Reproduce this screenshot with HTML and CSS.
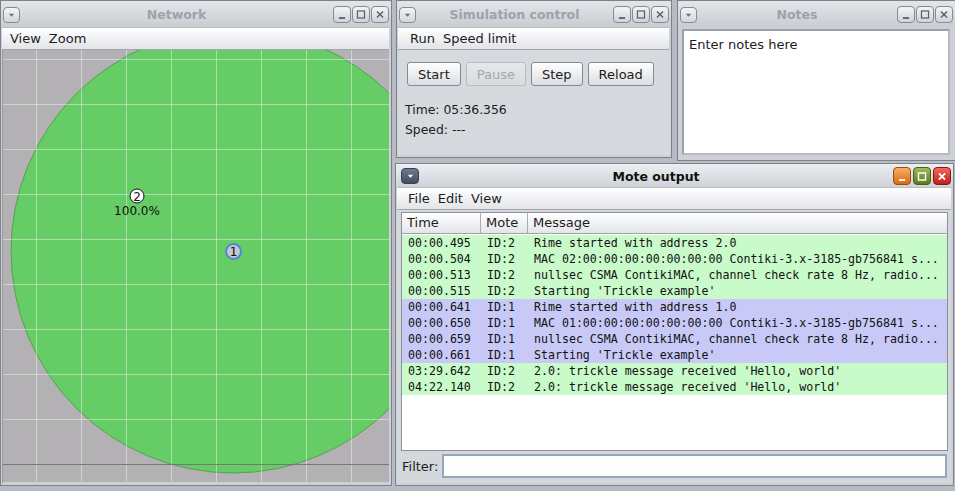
FILE: index.html
```html
<!DOCTYPE html>
<html>
<head>
<meta charset="utf-8">
<link rel="stylesheet" href="styles.css">
</head>
<body>

<div class="win net">
  <div class="titlebar">
    <span class="dd"><svg width="16" height="16" viewBox="0 0 16 16"><path d="M5 6.5h6l-3 3.5z" fill="#6b7079"/></svg></span>
    <span class="ttl">Network</span>
    <span class="btns">
      <span class="tb"><svg width="17" height="17" viewBox="0 0 17 17"><path d="M5 12.5h7" stroke="#5a5f67" stroke-width="2"/></svg></span>
      <span class="tb"><svg width="17" height="17" viewBox="0 0 17 17"><rect x="4.5" y="4.5" width="8" height="8" fill="none" stroke="#5a5f67" stroke-width="1.4"/></svg></span>
      <span class="tb"><svg width="17" height="17" viewBox="0 0 17 17"><path d="M5 5l7 7M12 5l-7 7" stroke="#5a5f67" stroke-width="1.6"/></svg></span>
    </span>
  </div>
  <div class="menubar"><span class="mi">View</span><span class="mi">Zoom</span></div>
  <div class="canvas">
    <svg width="387" height="432" viewBox="2 50 387 432">
      <rect x="2" y="50" width="387" height="432" fill="#b3b1b3"/>
      <circle cx="232" cy="251" r="222" fill="#66cc66" stroke="#55a055" stroke-width="1"/>
      <g stroke="#ffffff" stroke-opacity="0.42" stroke-width="1">
        <path d="M35.5 50v432M80.5 50v432M125.5 50v432M170.5 50v432M215.5 50v432M260.5 50v432M305.5 50v432M350.5 50v432"/>
        <path d="M2 59.5h387M2 104.5h387M2 149.5h387M2 194.5h387M2 239.5h387M2 284.5h387M2 329.5h387M2 374.5h387M2 419.5h387"/>
      </g>
      <path d="M2 464.5h387" stroke="#777777" stroke-width="1"/>
      <circle cx="136" cy="196" r="7" fill="#ffffff" stroke="#111" stroke-width="1"/>
      <text x="136" y="200.5" class="nlab" text-anchor="middle">2</text>
      <text x="136" y="215" class="nlab" text-anchor="middle">100.0%</text>
      <circle cx="232.5" cy="251.5" r="7.5" fill="#c6c6d0" stroke="#5585d8" stroke-width="2"/>
      <text x="232.5" y="256" class="nlab" text-anchor="middle">1</text>
    </svg>
  </div>
</div>

<div class="win sim">
  <div class="titlebar">
    <span class="dd"><svg width="16" height="16" viewBox="0 0 16 16"><path d="M5 6.5h6l-3 3.5z" fill="#6b7079"/></svg></span>
    <span class="ttl">Simulation control</span>
    <span class="btns">
      <span class="tb"><svg width="17" height="17" viewBox="0 0 17 17"><path d="M5 12.5h7" stroke="#5a5f67" stroke-width="2"/></svg></span>
      <span class="tb"><svg width="17" height="17" viewBox="0 0 17 17"><rect x="4.5" y="4.5" width="8" height="8" fill="none" stroke="#5a5f67" stroke-width="1.4"/></svg></span>
      <span class="tb"><svg width="17" height="17" viewBox="0 0 17 17"><path d="M5 5l7 7M12 5l-7 7" stroke="#5a5f67" stroke-width="1.6"/></svg></span>
    </span>
  </div>
  <div class="menubar wide"><span class="mi">Run</span><span class="mi">Speed limit</span></div>
  <div class="simbody">
    <div class="brow">
      <span class="btn">Start</span>
      <span class="btn dis">Pause</span>
      <span class="btn">Step</span>
      <span class="btn">Reload</span>
    </div>
    <div class="line">Time: 05:36.356</div>
    <div class="line">Speed: ---</div>
  </div>
</div>

<div class="win notes">
  <div class="titlebar">
    <span class="dd"><svg width="16" height="16" viewBox="0 0 16 16"><path d="M5 6.5h6l-3 3.5z" fill="#6b7079"/></svg></span>
    <span class="ttl">Notes</span>
    <span class="btns">
      <span class="tb"><svg width="17" height="17" viewBox="0 0 17 17"><path d="M5 12.5h7" stroke="#5a5f67" stroke-width="2"/></svg></span>
      <span class="tb"><svg width="17" height="17" viewBox="0 0 17 17"><rect x="4.5" y="4.5" width="8" height="8" fill="none" stroke="#5a5f67" stroke-width="1.4"/></svg></span>
      <span class="tb"><svg width="17" height="17" viewBox="0 0 17 17"><path d="M5 5l7 7M12 5l-7 7" stroke="#5a5f67" stroke-width="1.6"/></svg></span>
    </span>
  </div>
  <div class="notearea">Enter notes here</div>
</div>

<div class="win mote">
  <div class="titlebar act">
    <span class="dd act"><svg width="16" height="16" viewBox="0 0 16 16"><path d="M5 6.5h6l-3 3.5z" fill="#ffffff"/></svg></span>
    <span class="ttl">Mote output</span>
    <span class="btns">
      <span class="tb orange"><svg width="17" height="17" viewBox="0 0 17 17"><path d="M5 12.5h7" stroke="#fff" stroke-width="2"/></svg></span>
      <span class="tb green"><svg width="17" height="17" viewBox="0 0 17 17"><rect x="4.5" y="4.5" width="8" height="8" fill="none" stroke="#fff" stroke-width="1.6"/></svg></span>
      <span class="tb red"><svg width="17" height="17" viewBox="0 0 17 17"><path d="M5 5l7 7M12 5l-7 7" stroke="#fff" stroke-width="2"/></svg></span>
    </span>
  </div>
  <div class="menubar wide"><span class="mi">File</span><span class="mi">Edit</span><span class="mi">View</span></div>
  <div class="motebody">
    <div class="table">
      <div class="thead"><span>Time</span><span>Mote</span><span>Message</span></div>
      <div class="tr g"><span>00:00.495</span><span>ID:2</span><span>Rime started with address 2.0</span></div>
      <div class="tr g"><span>00:00.504</span><span>ID:2</span><span>MAC 02:00:00:00:00:00:00:00 Contiki-3.x-3185-gb756841 s...</span></div>
      <div class="tr g"><span>00:00.513</span><span>ID:2</span><span>nullsec CSMA ContikiMAC, channel check rate 8 Hz, radio...</span></div>
      <div class="tr g"><span>00:00.515</span><span>ID:2</span><span>Starting 'Trickle example'</span></div>
      <div class="tr b"><span>00:00.641</span><span>ID:1</span><span>Rime started with address 1.0</span></div>
      <div class="tr b"><span>00:00.650</span><span>ID:1</span><span>MAC 01:00:00:00:00:00:00:00 Contiki-3.x-3185-gb756841 s...</span></div>
      <div class="tr b"><span>00:00.659</span><span>ID:1</span><span>nullsec CSMA ContikiMAC, channel check rate 8 Hz, radio...</span></div>
      <div class="tr b"><span>00:00.661</span><span>ID:1</span><span>Starting 'Trickle example'</span></div>
      <div class="tr g"><span>03:29.642</span><span>ID:2</span><span>2.0: trickle message received 'Hello, world'</span></div>
      <div class="tr g"><span>04:22.140</span><span>ID:2</span><span>2.0: trickle message received 'Hello, world'</span></div>
    </div>
    <div class="filter"><span class="flabel">Filter:</span><span class="finput"></span></div>
  </div>
</div>

</body>
</html>
```

FILE: styles.css
```css
* { box-sizing: border-box; margin: 0; padding: 0; }
html, body { width: 955px; height: 491px; overflow: hidden; }
body {
  background: #b7bbc3;
  font-family: "DejaVu Sans", "Noto Sans", sans-serif;
  font-size: 13px;
  color: #1c1c1c;
  position: relative;
}

.win {
  position: absolute;
  display: flex;
  flex-direction: column;
  border: 1px solid #7d828a;
  background: #cdd0d6;
  padding: 0 2px 2px 1px;
}
.net { left: 0; top: 0; width: 392px; height: 486px; }
.sim { left: 396px; top: 0; width: 276px; height: 158px; }
.notes { left: 677px; top: 0; width: 279px; height: 161px; }
.mote { left: 395px; top: 163px; width: 559px; height: 323px; }

.titlebar {
  height: 26px;
  flex: none;
  display: flex;
  align-items: center;
  background: linear-gradient(#e3e5e9, #c9cdd3);
  margin: 0 -2px 0 -1px;
  padding-left: 2px;
  padding-right: 2px;
}
.titlebar.act { height: 23px; background: linear-gradient(#eceef1, #cfd2d8); }
.ttl {
  flex: 1;
  text-align: center;
  font-weight: bold;
  font-size: 12.5px;
  color: #9ea2a9;
  padding-top: 1px;
}
.act .ttl { color: #111; }

.dd {
  width: 17px;
  height: 16px;
  border: 1px solid #868b93;
  border-radius: 4px;
  background: linear-gradient(#f3f4f6, #d2d5db);
  display: flex;
  align-items: center;
  justify-content: center;
  margin-top: 1px;
}
.dd svg { width: 15px; height: 14px; }
.dd.act { background: linear-gradient(#6c788e, #434e63); border-color: #39414f; margin-left: 3px; width: 18px; }

.btns { display: flex; gap: 1px; margin-top: 1px; }
.tb {
  width: 18px;
  height: 17px;
  border: 1px solid #868b93;
  border-radius: 4px;
  background: linear-gradient(#f3f4f6, #d0d3d9);
  display: flex;
  align-items: center;
  justify-content: center;
}
.tb svg { width: 16px; height: 15px; }
.tb.orange { background: linear-gradient(#f6b062, #d86a14); border-color: #9c4a0c; }
.tb.green { background: linear-gradient(#a1b957, #5d7a1e); border-color: #46601a; }
.tb.red { background: linear-gradient(#ef6a5e, #c0201c); border-color: #8c1410; }
.mote .btns { gap: 2px; }
.mote .tb { height: 18px; }

.menubar {
  height: 23px;
  flex: none;
  display: flex;
  align-items: center;
  padding-left: 4px;
  background: linear-gradient(#ffffff, #e2e4e8);
  border-top: 1px solid #b9bdc4;
  border-bottom: 1px solid #a2a6ad;
}
.menubar.wide { padding-left: 7px; }
.sim .menubar.wide { padding-left: 8px; }
.mi { padding: 0 4px; }

.canvas { flex: 1; overflow: hidden; border-left: 1px solid #9a9a9a; }
.canvas svg { display: block; }
.nlab { font-family: "DejaVu Sans", sans-serif; font-size: 12px; fill: #111; }

.simbody {
  flex: 1;
  background: #d6d9de;
  padding: 12px 0 0 7px;
  margin-right: -1px;
}
.brow { display: flex; gap: 5px; padding-left: 2px; }
.btn {
  height: 24px;
  padding: 0 10px;
  border: 1px solid #858a92;
  border-radius: 3px;
  background: linear-gradient(#ffffff, #dadde2);
  display: flex;
  align-items: center;
}
.btn.dis { color: #a3a7ad; border-color: #b7bbc1; background: linear-gradient(#e6e8eb, #d8dbdf); }
.line { height: 20px; line-height: 20px; font-size: 12.4px; }
.brow + .line { margin-top: 14px; }

.notearea {
  margin: 2px 3px 0 3px;
  height: 126px;
  background: #fff;
  border: 2px solid #9ca0a8;
  border-right-color: #b6bac0;
  border-bottom-color: #b6bac0;
  padding: 6px 0 0 5px;
}

.motebody {
  flex: 1;
  display: flex;
  flex-direction: column;
  background: #d4d7dc;
  padding: 2px 3px 0 4px;
}
.table {
  height: 239px;
  background: #fff;
  border: 1px solid #8c9098;
}
.thead {
  height: 21px;
  display: grid;
  grid-template-columns: 79px 47px 1fr;
  background: linear-gradient(#ffffff, #e3e5e9);
  border-bottom: 1px solid #9da1a8;
  margin-bottom: 1px;
}
.thead span {
  padding-left: 5px;
  line-height: 20px;
  border-right: 1px solid #a9adb3;
}
.thead span:last-child { border-right: none; }
.tr {
  height: 16px;
  display: grid;
  grid-template-columns: 79px 47px 1fr;
  font-family: "DejaVu Sans Mono", "Liberation Mono", monospace;
  font-size: 11.6px;
  line-height: 16px;
  white-space: pre;
  color: #111;
}
.tr span { padding-left: 6px; overflow: hidden; }
.tr.g { background: #c9fac9; }
.tr.b { background: #c9c9f8; }

.filter {
  display: flex;
  align-items: center;
  height: 30px;
  gap: 4px;
}
.flabel { padding-left: 1px; }
.finput {
  flex: 1;
  height: 24px;
  background: #fdfdfb;
  border: 2px solid #93a7bc;
  margin-right: 1px;
}
```
